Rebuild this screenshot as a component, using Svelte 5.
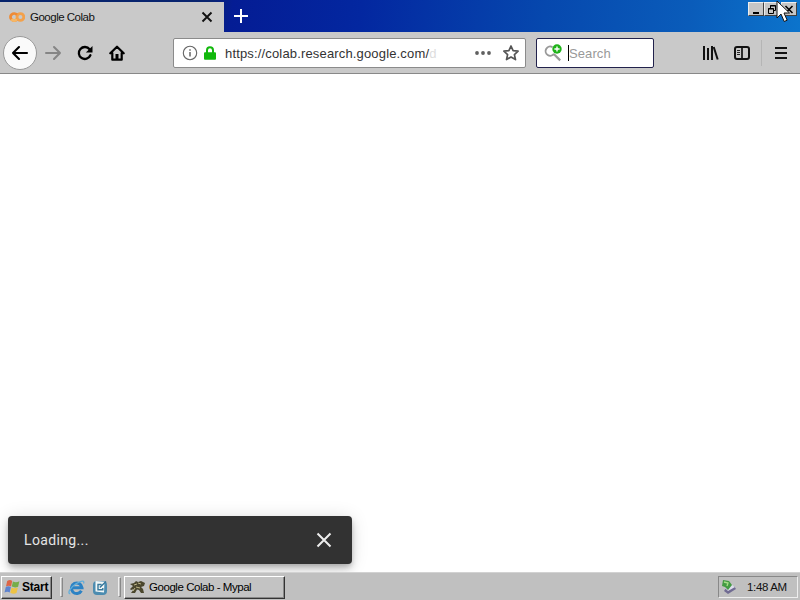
<script lang="ts">
	let title = $state('Google Colab');
	let query = $state('');
	let toastOpen = $state(true);

	function closeToast() {
		toastOpen = false;
	}
</script>

<div class="screen">
	<header class="titlebar">
		<div class="tab">
			<svg class="favicon" width="16" height="12" viewBox="0 0 16 12" fill="none" stroke-width="2.8">
				<circle cx="11.4" cy="6" r="3.4" stroke="#f3a14b" />
				<path d="M8 3.8a3.7 3.4 0 1 0 0 4.4" stroke="#ef8b35" />
				<path d="M2.5 8.2a3.3 3.3 0 0 0 5.3 0" stroke="#f6b765" />
			</svg>
			<span class="tab-title">{title}</span>
			<button class="plain tab-close" aria-label="Close tab">
				<svg width="12" height="12" viewBox="0 0 12 12" stroke="#111" stroke-width="1.9">
					<path d="M1.5 1.5l9 9M10.5 1.5l-9 9" />
				</svg>
			</button>
		</div>
		<button class="plain new-tab" aria-label="New tab">
			<svg width="14" height="14" viewBox="0 0 14 14" stroke="#fff" stroke-width="2">
				<path d="M7 0v14M0 7h14" />
			</svg>
		</button>
		<div class="window-buttons">
			<button class="win" aria-label="Minimize">
				<svg width="12" height="11" viewBox="0 0 12 11"><path d="M3 8h6v2H3z" /></svg>
			</button>
			<button class="win" aria-label="Restore">
				<svg width="12" height="11" viewBox="0 0 12 11" fill="none" stroke="#000">
					<path d="M4.5 4V1.5h5v5H8M4 2h6M2.5 4.5h5v5h-5zM2 5h6" />
				</svg>
			</button>
			<button class="win last" aria-label="Close">
				<svg width="12" height="11" viewBox="0 0 12 11" stroke="#000" stroke-width="1.6">
					<path d="M2.5 2l7 7M9.5 2l-7 7" />
				</svg>
			</button>
		</div>
	</header>

	<nav class="toolbar">
		<button class="plain back" aria-label="Back">
			<svg width="18" height="16" viewBox="0 0 18 16" fill="none" stroke="#000" stroke-width="2.1" stroke-linecap="round" stroke-linejoin="round">
				<path d="M16 8H2M8 2L2 8l6 6" />
			</svg>
		</button>
		<button class="plain forward" aria-label="Forward">
			<svg width="18" height="16" viewBox="0 0 18 16" fill="none" stroke="#858585" stroke-width="2" stroke-linecap="round" stroke-linejoin="round">
				<path d="M2 8h14M10 2l6 6-6 6" />
			</svg>
		</button>
		<button class="plain reload" aria-label="Reload">
			<svg width="16" height="16" viewBox="0 0 16 16" fill="none" stroke="#000" stroke-width="2.3" stroke-linecap="round">
				<path d="M13.4 10.3A6 6 0 1 1 12.6 4.3" />
				<path d="M15.5 1v6.6H8.9z" fill="#000" stroke="none" />
			</svg>
		</button>
		<button class="plain home" aria-label="Home">
			<svg width="16" height="16" viewBox="0 0 16 16" fill="none" stroke="#000" stroke-width="2.2" stroke-linecap="round" stroke-linejoin="round">
				<path d="M1.3 8.3L8 1.7l6.7 6.6M3.3 8v6.7h9.4V8" />
				<path d="M6.5 9h3v5.5h-3z" fill="#000" stroke="none" />
			</svg>
		</button>

		<div class="urlbar">
			<svg class="info" width="16" height="16" viewBox="0 0 16 16" fill="none" stroke="#666">
				<circle cx="8" cy="8" r="6.7" stroke-width="1.1" />
				<path d="M8 7v4.6M8 4.2v1.6" stroke-width="1.5" />
			</svg>
			<svg class="lock" width="12" height="14" viewBox="0 0 12 14">
				<path d="M3 7V4.2a3 3 0 0 1 6 0V7" fill="none" stroke="#12b80c" stroke-width="2" />
				<rect x="0" y="6.2" width="12" height="7.5" rx="1" fill="#12b80c" />
			</svg>
			<span class="url">https://colab.research.google.com/<span class="fade">d</span></span>
			<svg class="dots" width="16" height="4" viewBox="0 0 16 4" fill="#606060">
				<circle cx="2" cy="2" r="1.9" /><circle cx="8" cy="2" r="1.9" /><circle cx="14" cy="2" r="1.9" />
			</svg>
			<svg class="star" width="16" height="16" viewBox="0 0 16 16" fill="none" stroke="#555" stroke-width="1.7" stroke-linejoin="round">
				<path d="M8 1l2.1 4.7 5 .5-3.7 3.4 1.1 5L8 12l-4.5 2.6 1.1-5L.9 6.2l5-.5z" />
			</svg>
		</div>

		<div class="searchbar">
			<svg width="18" height="18" viewBox="0 0 18 18" fill="none">
				<path d="M8.5 3.1A4.6 4.6 0 1 0 10 9.7" stroke="#999" stroke-width="1.9" />
				<path d="M9.8 10l6.4 6.4" stroke="#999" stroke-width="2.2" />
				<circle cx="13" cy="5" r="4.7" fill="#20b31a" />
				<path d="M13 2.4v5.2M10.4 5h5.2" stroke="#fff" stroke-width="1.4" />
			</svg>
			<span class="caret"></span>
			<input bind:value={query} placeholder="Search" aria-label="Search" />
		</div>

		<div class="tools">
			<svg width="17" height="16" viewBox="0 0 17 16" stroke="#111" stroke-width="2">
				<path d="M2 1v14M6 3v12M10 1v14M11.7 2l4 12.5" />
			</svg>
			<svg class="sidebar" width="16" height="14" viewBox="0 0 16 14" fill="none" stroke="#111">
				<rect x="1" y="1" width="14" height="12" rx="2" stroke-width="2" />
				<path d="M8 1v12" stroke-width="1.7" />
				<path d="M3 4.5h3M3 6.5h3M3 8.5h3" stroke-width="0.9" />
			</svg>
			<span class="divider"></span>
			<svg width="12" height="12" viewBox="0 0 12 12" stroke="#111" stroke-width="2">
				<path d="M0 1h12M0 6h12M0 11h12" />
			</svg>
		</div>
	</nav>

	<main class="page">
		{#if toastOpen}
			<div class="toast">
				<span>Loading...</span>
				<button class="plain" aria-label="Dismiss" onclick={closeToast}>
					<svg width="16" height="16" viewBox="0 0 16 16" stroke="#eee" stroke-width="2">
						<path d="M1.5 1.5l13 13M14.5 1.5l-13 13" />
					</svg>
				</button>
			</div>
		{/if}
	</main>

	<footer class="taskbar">
		<button class="start">
			<svg width="17" height="16" viewBox="0 0 17 16">
				<path d="M3.2 2q3-1.8 5 0L7.1 7.4q-2.4-1.5-5.1 0z" fill="#dc6547" />
				<path d="M8.9 2.6q3.1 1.6 6.5-.3l-1.3 5.4Q11 9.2 7.8 7.6z" fill="#76ad49" />
				<path d="M1.8 8.1q2.6-1.5 5.1 0l-1.2 5.5q-2.2-1.5-5.2 0z" fill="#5d83cf" />
				<path d="M7.6 8.4q3.2 1.6 6.3.2L12.5 14q-3 1.4-6.2-.2z" fill="#edc344" />
			</svg>
			<span>Start</span>
		</button>
		<span class="rule"></span>
		<svg class="ie" width="17" height="17" viewBox="0 0 17 17" fill="none">
			<path d="M13.4 11.8A5.3 5.3 0 1 1 14 8.7H5" stroke="#2c82c4" stroke-width="3" />
			<path d="M2.3 14.5C-.8 15 1.5 8.8 8 4.7 13.5 1.4 17 1.3 15.5 4.5" stroke="#62aeda" stroke-width="1.3" />
		</svg>
		<svg class="desktop" width="16" height="17" viewBox="0 0 16 17">
			<rect x="1" y="2" width="14" height="14" rx="4" fill="#4c8cb0" />
			<path d="M3.5 2l9 .8-.5 10.7-8.5-1z" fill="#f2f7f7" />
			<path d="M9.5 5.5H6v5.3h4.8V9M7.8 8.6L14 2.4" fill="none" stroke="#36789b" stroke-width="1.4" />
		</svg>
		<span class="rule second"></span>
		<button class="task">
			<svg width="17" height="16" viewBox="0 0 17 16">
				<path d="M1 5l4-1 2-2 2 1 3-1 4 2-1 3-3 1 2 2 1 4h-3l-2-3-2-.5L6 14H2l3-4-3 1-1-1 3-3z" fill="#4b472e" />
				<path d="M5 6l3-1M9 4l3 1M7 8l4 1M4 12l2-3" stroke="#c0b889" />
			</svg>
			<span>{title} - Mypal</span>
		</button>
		<div class="tray">
			<svg width="15" height="16" viewBox="0 0 15 16">
				<path d="M5 9l8-2 2 3-8 5-4-3z" fill="#706b92" />
				<path d="M4 9l7-3 3 2-7 4z" fill="#ddddeb" />
				<path d="M2 1l6 1 3 4-4 5-3-3-3-1z" fill="#439b43" />
				<path d="M3 3l4 1-1 3" fill="none" stroke="#a7df88" stroke-width="1.3" />
			</svg>
			<span>1:48 AM</span>
		</div>
	</footer>

	<svg class="cursor" width="15" height="23" viewBox="0 0 15 23">
		<path d="M1 1v17l4-4 3.2 7.5 3-1.3L8 13h5.5z" fill="#fff" stroke="#111" />
	</svg>
</div>

<style>
	:global(body) {
		margin: 0;
		overflow: hidden;
	}

	.screen {
		position: relative;
		display: flex;
		flex-direction: column;
		width: 800px;
		height: 600px;
		background: #fff;
		font-family: 'Liberation Sans', Arial, sans-serif;
		color: #111;
	}

	.screen * {
		box-sizing: border-box;
	}

	svg {
		display: block;
		flex: none;
	}

	.plain {
		display: flex;
		align-items: center;
		justify-content: center;
		flex: none;
		padding: 0;
		border: 0;
		background: none;
	}

	.titlebar {
		display: flex;
		height: 32px;
		background: linear-gradient(97deg, #06246c 0, #08246f 26%, #041c94 29%, #0327a0 45%, #0648ae 68%, #0a5cba 86%, #0c74cc 100%);
	}

	.tab {
		display: flex;
		align-items: center;
		width: 224px;
		height: 30px;
		margin-top: 2px;
		padding: 0 11px 0 9px;
		background: #c9c9c9;
	}

	.tab-title {
		margin-left: 5px;
		font-size: 11.5px;
		letter-spacing: -0.5px;
		white-space: nowrap;
	}

	.tab-close {
		margin-left: auto;
	}

	.new-tab {
		width: 33px;
		height: 32px;
	}

	.window-buttons {
		display: flex;
		margin: 2px 3px 0 auto;
	}

	.win {
		display: flex;
		width: 16px;
		height: 14px;
		padding: 1px;
		border: 1px solid;
		border-color: #eee #404040 #404040 #eee;
		background: #c6c6c6;
	}

	.win.last {
		margin-left: 1px;
	}

	.toolbar {
		display: flex;
		align-items: center;
		height: 42px;
		padding: 1px 13px 0 3px;
		background: #c9c9c9;
		border-bottom: 1px solid #888;
	}

	.back {
		width: 34px;
		height: 34px;
		border: 1px solid #999;
		border-radius: 50%;
		background: #fafafa;
	}

	.forward {
		margin-left: 7px;
	}

	.reload {
		margin-left: 15px;
	}

	.home {
		margin-left: 16px;
	}

	.urlbar {
		display: flex;
		align-items: center;
		width: 353px;
		height: 30px;
		margin-left: 48px;
		padding: 0 6px 0 8px;
		border: 1px solid #8b8b8b;
		border-radius: 2px;
		background: #fff;
	}

	.lock {
		margin-left: 6px;
	}

	.url {
		margin-left: 9px;
		font-size: 13px;
		letter-spacing: 0.16px;
		white-space: nowrap;
		color: #333;
	}

	.fade {
		color: #ddd;
	}

	.dots {
		margin-left: auto;
	}

	.star {
		margin-left: 12px;
	}

	.searchbar {
		display: flex;
		align-items: center;
		width: 118px;
		height: 30px;
		margin-left: 10px;
		padding-left: 7px;
		border: 1px solid #22224c;
		border-radius: 2px;
		background: #fff;
	}

	.caret {
		width: 1px;
		height: 16px;
		margin-left: 6px;
		background: #000;
	}

	.searchbar input {
		width: 70px;
		padding: 0;
		border: 0;
		outline: none;
		background: none;
		font: 13px 'Liberation Sans', Arial, sans-serif;
		letter-spacing: 0.1px;
	}

	.searchbar input::placeholder {
		color: #999;
		opacity: 1;
	}

	.tools {
		display: flex;
		align-items: center;
		margin-left: auto;
	}

	.sidebar {
		margin-left: 15px;
	}

	.divider {
		width: 1px;
		height: 26px;
		margin: 0 13px 0 11px;
		background: #b5b5b5;
	}

	.page {
		display: flex;
		flex: 1;
		align-items: flex-end;
		padding: 0 8px 8px;
	}

	.toast {
		display: flex;
		align-items: center;
		justify-content: space-between;
		width: 344px;
		height: 48px;
		padding: 0 20px 0 16px;
		border-radius: 4px;
		background: #323232;
		box-shadow: 0 3px 5px -1px rgba(0, 0, 0, 0.2), 0 6px 10px rgba(0, 0, 0, 0.14), 0 1px 18px rgba(0, 0, 0, 0.12);
		color: #e4e4e4;
		font: 14px Roboto, sans-serif;
		letter-spacing: 0.36px;
	}

	.taskbar {
		position: relative;
		display: flex;
		align-items: center;
		height: 28px;
		padding: 1px 2px 0 1px;
		border-top: 1px solid #d2d2d2;
		background: #c0c0c0;
		font-size: 11.5px;
	}

	.start,
	.task {
		display: flex;
		align-items: center;
		height: 23px;
		padding: 0 2px;
		border: 1px solid;
		border-color: #fff #333 #333 #fff;
		background: #c3c3c3;
		box-shadow: inset -1px -1px #888;
		color: #000;
		font: 11.5px 'Liberation Sans', Arial, sans-serif;
		white-space: nowrap;
	}

	.start {
		width: 51px;
		font-size: 12px;
		font-weight: bold;
		letter-spacing: -0.2px;
	}

	.start span {
		margin-left: 1px;
	}

	.rule {
		width: 3px;
		height: 20px;
		margin-left: 8px;
		border: 1px solid;
		border-color: #eee #888 #888 #eee;
	}

	.ie {
		margin-left: 5px;
	}

	.desktop {
		margin-left: 7px;
	}

	.second {
		margin-left: 10px;
	}

	.task {
		width: 161px;
		margin-left: 3px;
		padding-left: 4px;
		letter-spacing: -0.45px;
	}

	.task span {
		margin-left: 3px;
	}

	.tray {
		display: flex;
		align-items: center;
		width: 80px;
		height: 22px;
		margin-left: auto;
		padding-left: 2px;
		border: 1px solid;
		border-color: #888 #eee #eee #888;
		letter-spacing: -0.35px;
		white-space: nowrap;
	}

	.tray span {
		margin-left: 11px;
	}

	.cursor {
		position: absolute;
		top: 0;
		left: 776px;
	}
</style>
